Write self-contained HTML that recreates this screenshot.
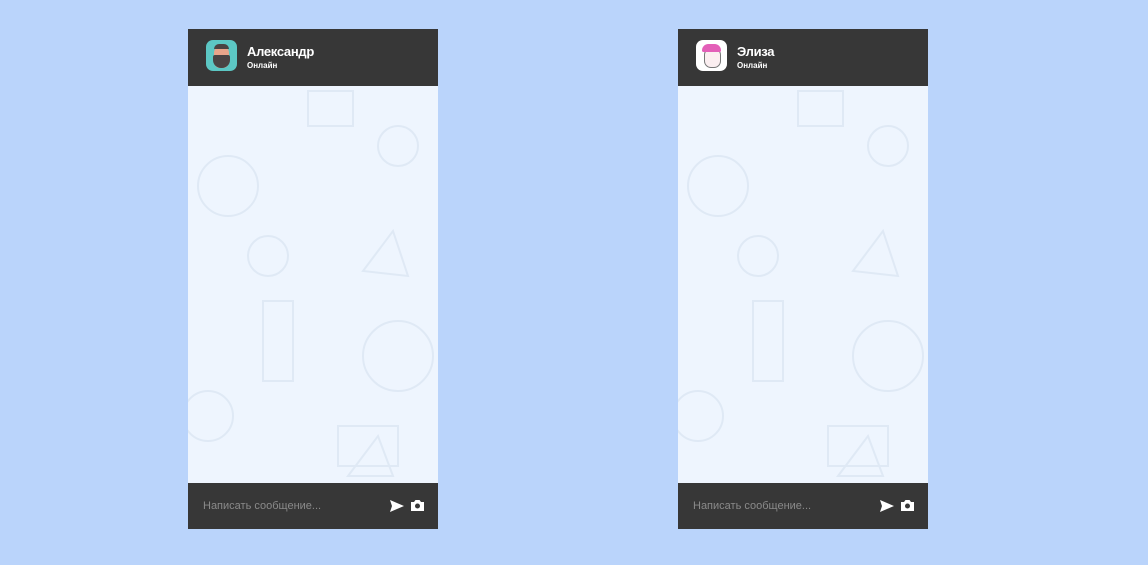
<!DOCTYPE html>
<html><head><meta charset="utf-8"><style>
body{margin:0;width:1148px;height:565px;background:#bad4fb;position:relative;overflow:hidden;font-family:"Liberation Sans",Arial,sans-serif}
.p{position:absolute;top:29px;width:250px;height:500px;background:#eef5fe}
.h{position:absolute;left:0;top:0;width:250px;height:57px;background:#373737}
.av{position:absolute;left:18px;top:11px;width:31px;height:31px;border-radius:7px}
.n{position:absolute;left:59px;top:15px;color:#fff;font-size:13px;font-weight:bold;letter-spacing:-.3px}
.s{position:absolute;left:59px;top:32px;color:#fff;font-size:8px;font-weight:bold}
.f{position:absolute;left:0;bottom:0;width:250px;height:46px;background:#373737}
.ph{position:absolute;left:15px;top:17px;color:#8a8a8a;font-size:11px}
svg.d{position:absolute;left:0;top:57px}
</style></head><body>
<div class="p" style="left:188px">
<svg class="d" width="250" height="397" fill="none" stroke="#dfe9f5" stroke-width="2">
<circle cx="40" cy="100" r="30"/><circle cx="80" cy="170" r="20"/><rect x="75" y="215" width="30" height="80"/><circle cx="210" cy="270" r="35"/><path d="M175 185 l30 -40 l15 45z"/><path d="M160 390 l30 -40 l15 40 z"/><rect x="150" y="340" width="60" height="40"/><circle cx="20" cy="330" r="25"/><rect x="120" y="5" width="45" height="35"/><circle cx="210" cy="60" r="20"/>
</svg>
<div class="h"><div class="av" style="background:#5cc7c4"><div style="position:absolute;left:8px;top:6px;width:15px;height:22px;border-radius:7px 7px 6px 6px;background:#e9a48a"></div><div style="position:absolute;left:7px;top:15px;width:17px;height:13px;border-radius:2px 2px 8px 8px;background:#4a4343"></div><div style="position:absolute;left:8px;top:4px;width:15px;height:5px;border-radius:6px 6px 0 0;background:#4a4343"></div></div><div class="n">Александр</div><div class="s">Онлайн</div></div>
<div class="f"><div class="ph">Написать сообщение...</div>
<svg style="position:absolute;left:202px;top:17px" width="14" height="12" viewBox="0 0 14 12"><path d="M0 0 L14 6 L0 12 L2 6z" fill="#fff"/></svg>
<svg style="position:absolute;left:223px;top:16px" width="13" height="12" viewBox="0 0 13 12"><path d="M0 3h3l1.5-2h4L10 3h3v9H0z" fill="#fff"/><circle cx="6.5" cy="7" r="2.5" fill="#373737"/></svg></div>
</div>
<div class="p" style="left:678px">
<svg class="d" width="250" height="397" fill="none" stroke="#dfe9f5" stroke-width="2">
<circle cx="40" cy="100" r="30"/><circle cx="80" cy="170" r="20"/><rect x="75" y="215" width="30" height="80"/><circle cx="210" cy="270" r="35"/><path d="M175 185 l30 -40 l15 45z"/><path d="M160 390 l30 -40 l15 40 z"/><rect x="150" y="340" width="60" height="40"/><circle cx="20" cy="330" r="25"/><rect x="120" y="5" width="45" height="35"/><circle cx="210" cy="60" r="20"/>
</svg>
<div class="h"><div class="av" style="background:#fff"><div style="position:absolute;left:8px;top:8px;width:15px;height:18px;border-radius:7px;background:#fbeef0;border:1px solid #777"></div><div style="position:absolute;left:6px;top:4px;width:19px;height:8px;border-radius:8px 8px 2px 2px;background:#e35fb8"></div></div><div class="n">Элиза</div><div class="s">Онлайн</div></div>
<div class="f"><div class="ph">Написать сообщение...</div>
<svg style="position:absolute;left:202px;top:17px" width="14" height="12" viewBox="0 0 14 12"><path d="M0 0 L14 6 L0 12 L2 6z" fill="#fff"/></svg>
<svg style="position:absolute;left:223px;top:16px" width="13" height="12" viewBox="0 0 13 12"><path d="M0 3h3l1.5-2h4L10 3h3v9H0z" fill="#fff"/><circle cx="6.5" cy="7" r="2.5" fill="#373737"/></svg></div>
</div>
</body></html>
